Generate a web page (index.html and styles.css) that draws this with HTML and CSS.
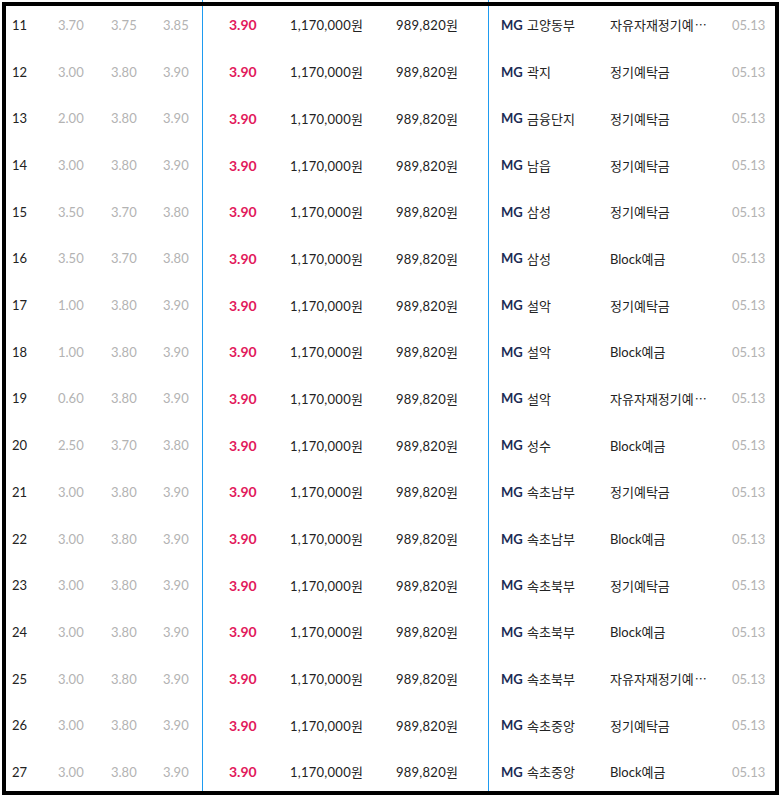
FILE: index.html
```html
<!DOCTYPE html>
<html lang="ko">
<head>
<meta charset="utf-8">
<title>금리 목록</title>
<link rel="stylesheet" href="styles.css">
</head>
<body>
<div class="sheet">
  <div class="rows">
    <div class="row"><span class="no">11</span><span class="g">3.70</span><span class="g">3.75</span><span class="g">3.85</span><span class="rate">3.90</span><span class="amt">1,170,000원</span><span class="amt">989,820원</span><span class="mg">MG</span><span class="br">고양동부</span><span class="pr" title="자유자재정기예탁금">자유자재정기예<span class="ell">⋯</span></span><span class="dt">05.13</span></div>
    <div class="row"><span class="no">12</span><span class="g">3.00</span><span class="g">3.80</span><span class="g">3.90</span><span class="rate">3.90</span><span class="amt">1,170,000원</span><span class="amt">989,820원</span><span class="mg">MG</span><span class="br">곽지</span><span class="pr">정기예탁금</span><span class="dt">05.13</span></div>
    <div class="row"><span class="no">13</span><span class="g">2.00</span><span class="g">3.80</span><span class="g">3.90</span><span class="rate">3.90</span><span class="amt">1,170,000원</span><span class="amt">989,820원</span><span class="mg">MG</span><span class="br">금융단지</span><span class="pr">정기예탁금</span><span class="dt">05.13</span></div>
    <div class="row"><span class="no">14</span><span class="g">3.00</span><span class="g">3.80</span><span class="g">3.90</span><span class="rate">3.90</span><span class="amt">1,170,000원</span><span class="amt">989,820원</span><span class="mg">MG</span><span class="br">남읍</span><span class="pr">정기예탁금</span><span class="dt">05.13</span></div>
    <div class="row"><span class="no">15</span><span class="g">3.50</span><span class="g">3.70</span><span class="g">3.80</span><span class="rate">3.90</span><span class="amt">1,170,000원</span><span class="amt">989,820원</span><span class="mg">MG</span><span class="br">삼성</span><span class="pr">정기예탁금</span><span class="dt">05.13</span></div>
    <div class="row"><span class="no">16</span><span class="g">3.50</span><span class="g">3.70</span><span class="g">3.80</span><span class="rate">3.90</span><span class="amt">1,170,000원</span><span class="amt">989,820원</span><span class="mg">MG</span><span class="br">삼성</span><span class="pr">Block예금</span><span class="dt">05.13</span></div>
    <div class="row"><span class="no">17</span><span class="g">1.00</span><span class="g">3.80</span><span class="g">3.90</span><span class="rate">3.90</span><span class="amt">1,170,000원</span><span class="amt">989,820원</span><span class="mg">MG</span><span class="br">설악</span><span class="pr">정기예탁금</span><span class="dt">05.13</span></div>
    <div class="row"><span class="no">18</span><span class="g">1.00</span><span class="g">3.80</span><span class="g">3.90</span><span class="rate">3.90</span><span class="amt">1,170,000원</span><span class="amt">989,820원</span><span class="mg">MG</span><span class="br">설악</span><span class="pr">Block예금</span><span class="dt">05.13</span></div>
    <div class="row"><span class="no">19</span><span class="g">0.60</span><span class="g">3.80</span><span class="g">3.90</span><span class="rate">3.90</span><span class="amt">1,170,000원</span><span class="amt">989,820원</span><span class="mg">MG</span><span class="br">설악</span><span class="pr" title="자유자재정기예탁금">자유자재정기예<span class="ell">⋯</span></span><span class="dt">05.13</span></div>
    <div class="row"><span class="no">20</span><span class="g">2.50</span><span class="g">3.70</span><span class="g">3.80</span><span class="rate">3.90</span><span class="amt">1,170,000원</span><span class="amt">989,820원</span><span class="mg">MG</span><span class="br">성수</span><span class="pr">Block예금</span><span class="dt">05.13</span></div>
    <div class="row"><span class="no">21</span><span class="g">3.00</span><span class="g">3.80</span><span class="g">3.90</span><span class="rate">3.90</span><span class="amt">1,170,000원</span><span class="amt">989,820원</span><span class="mg">MG</span><span class="br">속초남부</span><span class="pr">정기예탁금</span><span class="dt">05.13</span></div>
    <div class="row"><span class="no">22</span><span class="g">3.00</span><span class="g">3.80</span><span class="g">3.90</span><span class="rate">3.90</span><span class="amt">1,170,000원</span><span class="amt">989,820원</span><span class="mg">MG</span><span class="br">속초남부</span><span class="pr">Block예금</span><span class="dt">05.13</span></div>
    <div class="row"><span class="no">23</span><span class="g">3.00</span><span class="g">3.80</span><span class="g">3.90</span><span class="rate">3.90</span><span class="amt">1,170,000원</span><span class="amt">989,820원</span><span class="mg">MG</span><span class="br">속초북부</span><span class="pr">정기예탁금</span><span class="dt">05.13</span></div>
    <div class="row"><span class="no">24</span><span class="g">3.00</span><span class="g">3.80</span><span class="g">3.90</span><span class="rate">3.90</span><span class="amt">1,170,000원</span><span class="amt">989,820원</span><span class="mg">MG</span><span class="br">속초북부</span><span class="pr">Block예금</span><span class="dt">05.13</span></div>
    <div class="row"><span class="no">25</span><span class="g">3.00</span><span class="g">3.80</span><span class="g">3.90</span><span class="rate">3.90</span><span class="amt">1,170,000원</span><span class="amt">989,820원</span><span class="mg">MG</span><span class="br">속초북부</span><span class="pr" title="자유자재정기예탁금">자유자재정기예<span class="ell">⋯</span></span><span class="dt">05.13</span></div>
    <div class="row"><span class="no">26</span><span class="g">3.00</span><span class="g">3.80</span><span class="g">3.90</span><span class="rate">3.90</span><span class="amt">1,170,000원</span><span class="amt">989,820원</span><span class="mg">MG</span><span class="br">속초중앙</span><span class="pr">정기예탁금</span><span class="dt">05.13</span></div>
    <div class="row"><span class="no">27</span><span class="g">3.00</span><span class="g">3.80</span><span class="g">3.90</span><span class="rate">3.90</span><span class="amt">1,170,000원</span><span class="amt">989,820원</span><span class="mg">MG</span><span class="br">속초중앙</span><span class="pr">Block예금</span><span class="dt">05.13</span></div>
  </div>
  <div class="frame"></div>
</div>
</body>
</html>
```

FILE: styles.css
```css
* { box-sizing: border-box; }
html, body {
  margin: 0;
  padding: 0;
  background: #fff;
}
body {
  font-family: Lato, "Noto Sans CJK KR", sans-serif;
  font-size: 13px;
  color: #222;
}
.sheet {
  position: relative;
  width: 783px;
  height: 800px;
  overflow: hidden;
}
.rows {
  height: 795px;
  padding-top: 1.65px;
  background:
    linear-gradient(#1e9bf0, #1e9bf0) 202px 0 / 1px 100% no-repeat,
    linear-gradient(#1e9bf0, #1e9bf0) 488px 0 / 1px 100% no-repeat;
}
.row {
  display: grid;
  grid-template-columns: 46px 53px 52px 66px 61px 106px 105px 26px 83px 122px 1fr;
  align-items: center;
  height: 46.6875px;
  padding-left: 12px;
  white-space: nowrap;
}
.no { color: #222; }
.g { color: #b3b3b3; }
.rate {
  color: #e2195c;
  font-weight: 700;
  font-size: 14px;
}
.amt {
  color: #222;
  letter-spacing: 0.25px;
}
.mg {
  color: #1b2c55;
  font-weight: 700;
}
.br { color: #222; }
.pr { color: #222; }
.ell {
  font-family: "Noto Sans CJK KR", sans-serif;
  font-size: 12px;
  margin-left: 1px;
}
.dt { color: #b3b3b3; }
.frame {
  position: absolute;
  left: 2px;
  top: 2px;
  width: 777px;
  height: 793px;
  border: 4px solid #000;
  pointer-events: none;
}
```
